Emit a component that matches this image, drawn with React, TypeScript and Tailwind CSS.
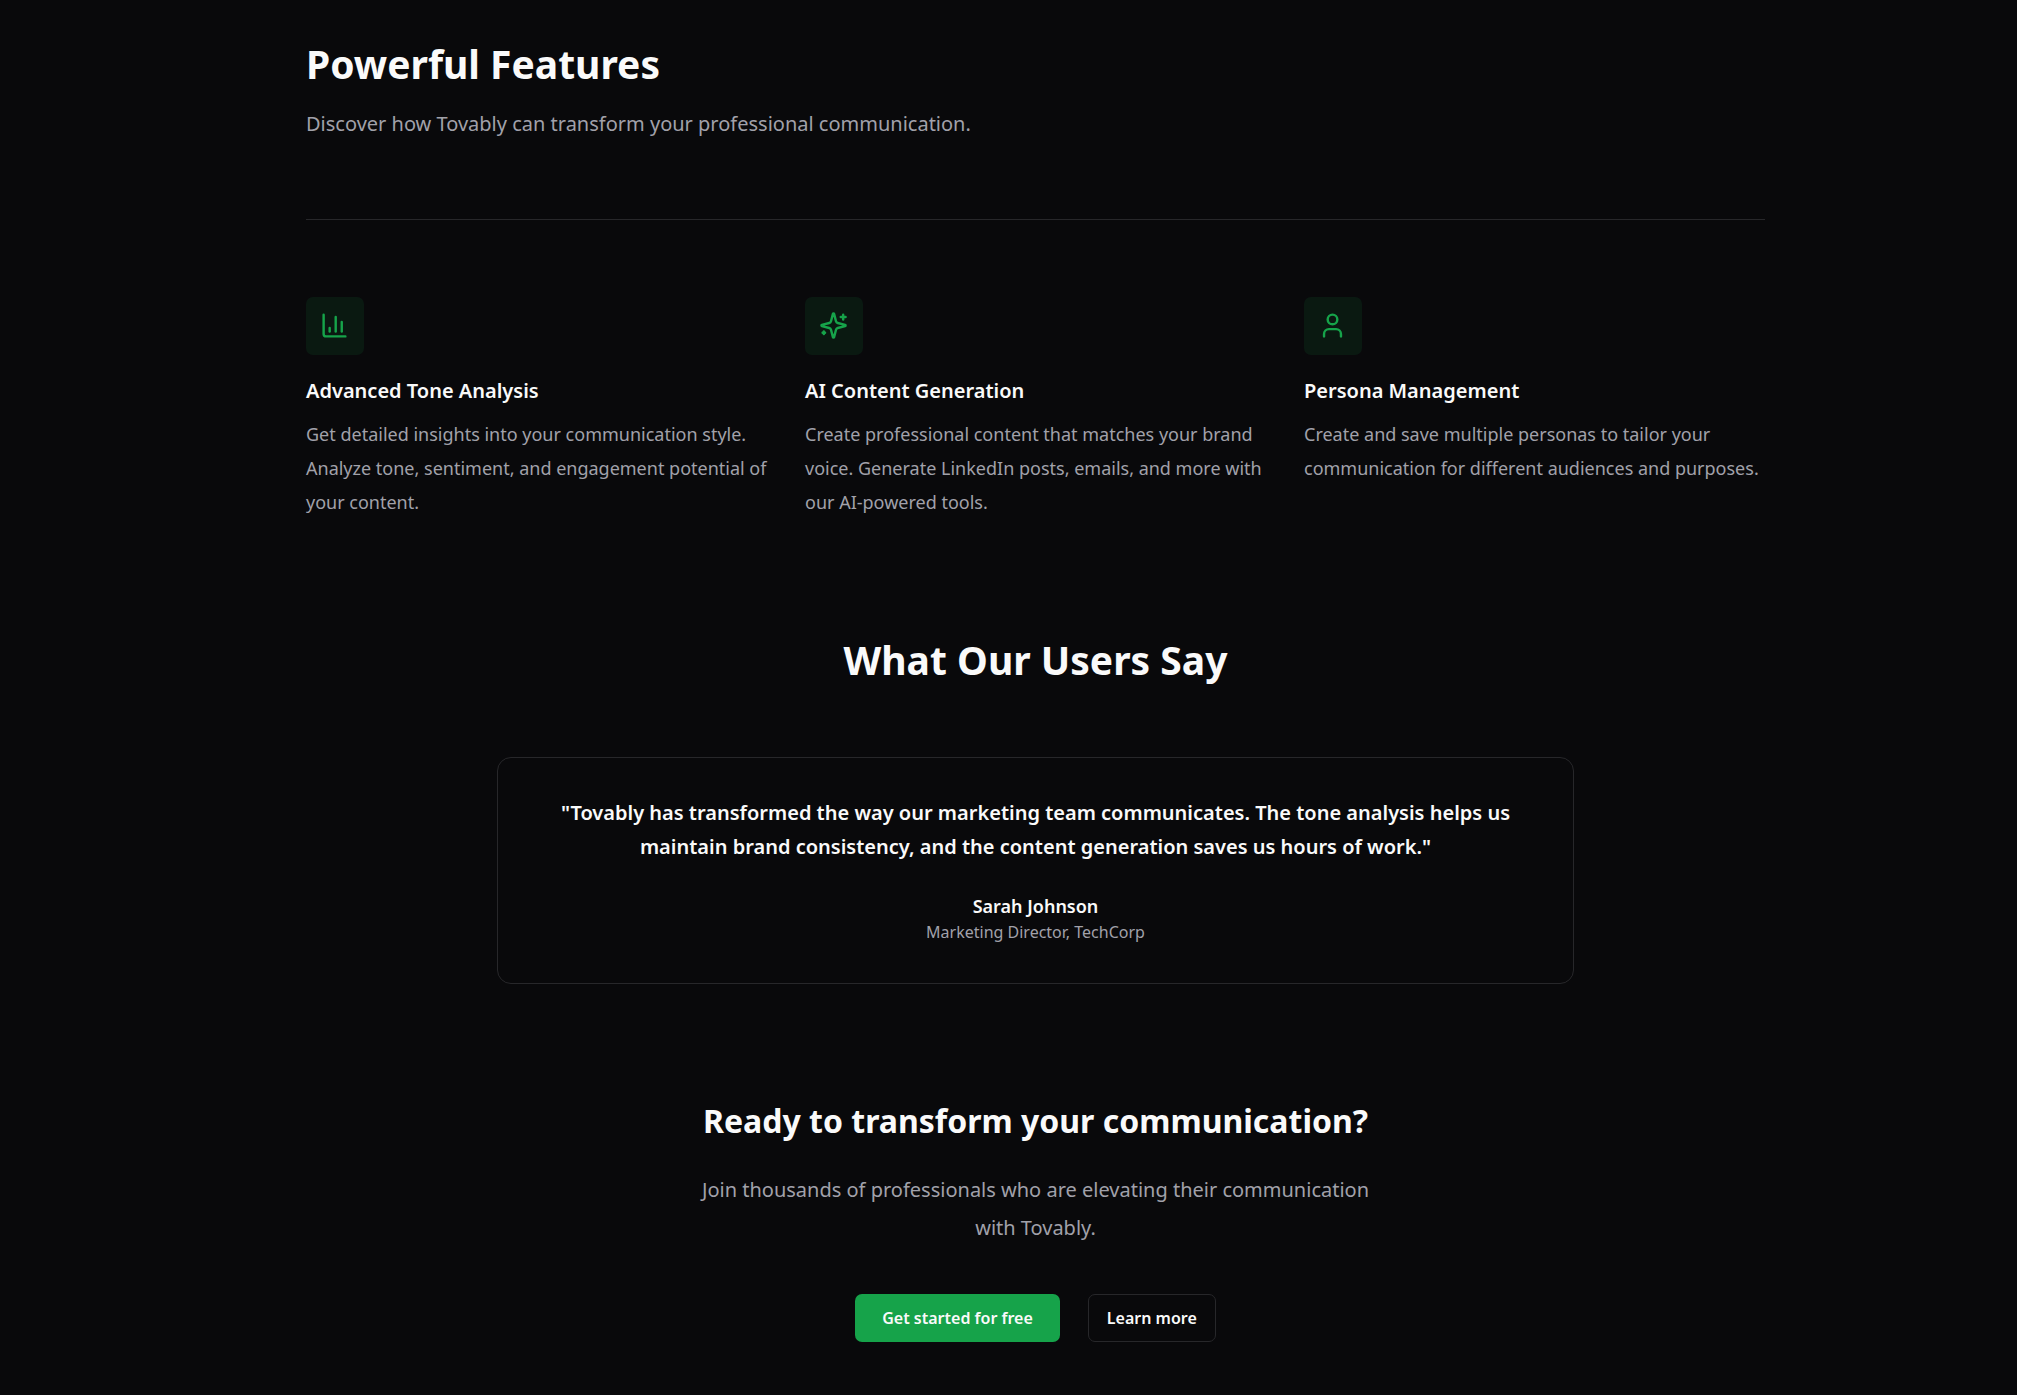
import type { ReactNode } from "react";

function Icon({ children }: { children: ReactNode }) {
  return (
    <svg
      className="size-[29px]"
      viewBox="0 0 24 24"
      fill="none"
      stroke="currentColor"
      strokeWidth="2"
      strokeLinecap="round"
      strokeLinejoin="round"
      aria-hidden="true"
    >
      {children}
    </svg>
  );
}

const features = [
  {
    title: "Advanced Tone Analysis",
    text: "Get detailed insights into your communication style. Analyze tone, sentiment, and engagement potential of your content.",
    icon: (
      <Icon>
        <path d="M3 3v16a2 2 0 0 0 2 2h16" />
        <path d="M18 17V9" />
        <path d="M13 17V5" />
        <path d="M8 17v-3" />
      </Icon>
    ),
  },
  {
    title: "AI Content Generation",
    text: "Create professional content that matches your brand voice. Generate LinkedIn posts, emails, and more with our AI-powered tools.",
    icon: (
      <Icon>
        <path d="M9.937 15.5A2 2 0 0 0 8.5 14.063l-6.135-1.582a.5.5 0 0 1 0-.962L8.5 9.936A2 2 0 0 0 9.937 8.5l1.582-6.135a.5.5 0 0 1 .963 0L14.063 8.5A2 2 0 0 0 15.5 9.937l6.135 1.581a.5.5 0 0 1 0 .964L15.5 14.063a2 2 0 0 0-1.437 1.437l-1.582 6.135a.5.5 0 0 1-.963 0z" />
        <path d="M20 3v4" />
        <path d="M22 5h-4" />
        <path d="M4 17v2" />
        <path d="M5 18H3" />
      </Icon>
    ),
  },
  {
    title: "Persona Management",
    text: "Create and save multiple personas to tailor your communication for different audiences and purposes.",
    icon: (
      <Icon>
        <path d="M19 21v-2a4 4 0 0 0-4-4H9a4 4 0 0 0-4 4v2" />
        <circle cx="12" cy="7" r="4" />
      </Icon>
    ),
  },
];

function Features() {
  return (
    <section>
      <h1 className="text-[39px] leading-[48px] font-bold">Powerful Features</h1>
      <p className="mt-[17px] text-[20px] leading-[38px] text-[#a1a1aa]">
        Discover how Tovably can transform your professional communication.
      </p>
      <div className="mt-[76px] grid grid-cols-1 gap-[38px] border-t border-[#27272a] pt-[77px] lg:grid-cols-3">
        {features.map((f) => (
          <article key={f.title}>
            <div className="size-[58px] rounded-[7px] bg-[#16a34a]/10 p-[14px] text-[#16a34a]">
              {f.icon}
            </div>
            <h3 className="mt-[19px] text-[20px] leading-[34px] font-semibold">{f.title}</h3>
            <p className="mt-[9px] text-[18px] leading-[34px] text-[#a1a1aa]">{f.text}</p>
          </article>
        ))}
      </div>
    </section>
  );
}

function Testimonial() {
  return (
    <section className="mt-[117px] text-center">
      <h2 className="text-[39px] leading-[48px] font-bold">What Our Users Say</h2>
      <figure className="mx-auto mt-[73px] max-w-[1077px] rounded-[14px] border border-[#27272a] p-[38px]">
        <blockquote className="text-[20px] leading-[34px] font-semibold">
          "Tovably has transformed the way our marketing team communicates. The tone analysis helps us
          maintain brand consistency, and the content generation saves us hours of work."
        </blockquote>
        <figcaption className="mt-7">
          <div className="text-[18px] leading-[28px] font-semibold">Sarah Johnson</div>
          <div className="text-[16px] leading-[25px] text-[#a1a1aa]">Marketing Director, TechCorp</div>
        </figcaption>
      </figure>
    </section>
  );
}

function CallToAction() {
  return (
    <section className="mt-[115px] text-center">
      <h2 className="text-[32px] leading-[44px] font-bold">Ready to transform your communication?</h2>
      <p className="mx-auto mt-7 max-w-[691px] text-[20px] leading-[38px] text-[#a1a1aa]">
        Join thousands of professionals who are elevating their communication with Tovably.
      </p>
      <div className="mt-[47px] flex flex-wrap items-center justify-center gap-7">
        <button
          type="button"
          className="h-12 rounded-[7px] bg-[#16a34a] px-[27px] text-[16px] font-semibold hover:bg-[#15803d]"
        >
          Get started for free
        </button>
        <button
          type="button"
          className="h-12 rounded-[7px] border border-[#27272a] px-[18px] text-[16px] font-semibold hover:bg-[#27272a]"
        >
          Learn more
        </button>
      </div>
    </section>
  );
}

export default function App() {
  return (
    <main className="min-h-screen bg-[#09090b] pl-[54px] font-['Noto_Sans','Open_Sans',sans-serif] text-[#fafafa]">
      <div className="mx-auto max-w-[1535px] px-[38px] pt-10 pb-12">
        <Features />
        <Testimonial />
        <CallToAction />
      </div>
    </main>
  );
}
